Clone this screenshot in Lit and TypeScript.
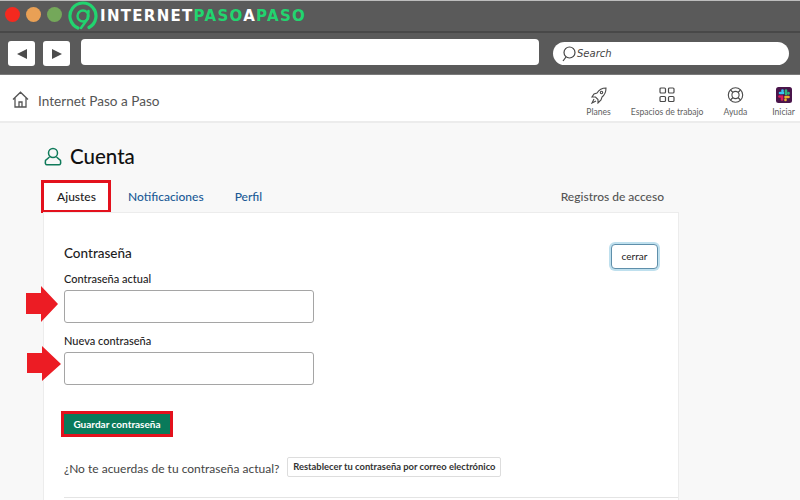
import { LitElement, html, css } from "lit";
import { customElement } from "lit/decorators.js";

@customElement("app-root")
export class AppRoot extends LitElement {
  static styles = css`
    :host { display: block; width: 800px; height: 500px; overflow: hidden; background: #f8f8f8; font-family: Lato, "Liberation Sans", sans-serif; color: #1d1c1d; }
    * { box-sizing: border-box; }
    .chrome { height: 75px; background: #5a5a5a; border-top: 1px solid #bdbdbd; border-bottom: 1px solid #7a7a7a; }
    .titlebar { height: 32px; display: flex; align-items: center; padding-left: 5px; border-bottom: 2px solid #484848; }
    .dot { width: 15px; height: 15px; border-radius: 50%; margin: 0 6px 4px 0; flex: none; }
    .red { background: #f5291f; } .orange { background: #e9a055; } .green { background: #74a85a; }
    .logo { width: 30px; height: 30px; flex: none; }
    .brand { margin-left: 2px; font: 700 15px/1 "DejaVu Sans", sans-serif; color: #fff; letter-spacing: 1.3px; white-space: nowrap; }
    .brand b { font-weight: 700; color: #22d46f; }
    .toolbar { height: 41px; display: flex; align-items: center; padding-left: 8px; }
    .nav-btn { width: 27px; height: 25px; background: #fff; border-radius: 3px; display: flex; align-items: center; justify-content: center; margin-right: 8px; flex: none; }
    .url { width: 458px; height: 26px; background: #fff; border-radius: 4px; margin: 0 0 3px 3px; }
    .search { width: 236px; height: 23px; margin-left: 14px; background: #fff; border-radius: 12px; display: flex; align-items: center; padding-left: 9px; gap: 1px; font: italic 10px "DejaVu Sans", sans-serif; color: #444; }
    .top { height: 48px; background: #fff; border-bottom: 2px solid #ececec; display: flex; align-items: center; padding-left: 12px; }
    .home { margin-top: 2px; flex: none; }
    .site { margin: 5px 0 0 9px; font-size: 13.6px; color: #555; }
    .spacer { flex: 1; }
    .items { display: flex; height: 100%; align-items: flex-start; padding-top: 11px; }
    .item { display: flex; flex-direction: column; align-items: center; font-size: 8.6px; color: #616161; gap: 3px; white-space: nowrap; }
    .item svg { display: block; height: 18px; }
    .planes { margin-right: 20px; } .esp { margin-right: 20px; } .ayu { margin-right: 25px; } .ini { margin-right: 5px; }
    main { position: relative; padding: 22px 121px 0 43px; }
    h1 { margin: 0; display: flex; align-items: center; gap: 8px; padding-left: 1px; font-size: 20.5px; font-weight: 500; line-height: 22px; color: #111; }
    .tabs { display: flex; align-items: center; margin-top: 13px; height: 32px; font-size: 12px; color: #1264a3; }
    .tab { margin-right: 31px; font-weight: 500; color: #1a5a96; }
    .tab.active { width: 70px; height: 33px; margin: 0 17px 0 -2px; padding-left: 1px; border: 3px solid #e3111d; background: #fff; color: #1d1c1d; display: flex; align-items: center; justify-content: center; }
    .tab.log { margin: 0 15px 0 auto; color: #555; }
    .card { position: relative; background: #fff; border: 1px solid #ececec; border-bottom: 0; height: 300px; padding: 31px 20px 0 20px; }
    .head { display: flex; justify-content: space-between; align-items: flex-start; height: 25px; }
    h2 { margin: 0; font-size: 13.5px; font-weight: 500; line-height: 19px; color: #1d1c1d; }
    .close { width: 47px; height: 25px; padding-bottom: 1px; background: #fff; border: 1.5px solid #5f8faa; border-radius: 4px; box-shadow: 0 0 0 2px #bfe0ee; font-size: 10px; display: flex; align-items: center; justify-content: center; color: #222; }
    label { display: block; font-size: 11px; font-weight: 500; line-height: 14px; color: #1d1c1d; margin-bottom: 4px; }
    .first { margin-top: 3px; } .second { margin-top: 11px; }
    .input { width: 250px; height: 33px; background: #fff; border: 1px solid #a5a5a5; border-radius: 3px; }
    .save { margin-top: 29px; width: 106px; height: 20px; background: #097a5a; outline: 3px solid #e3111d; color: #fff; font-size: 10px; font-weight: 700; display: flex; align-items: center; justify-content: center; }
    .forgot { display: flex; align-items: center; margin-top: 25px; height: 19px; font-size: 12px; color: #444; white-space: nowrap; }
    .reset { margin: -4px 0 0 8px; width: 214px; height: 20px; background: #fff; border: 1px solid #ddd; border-radius: 2px; font-size: 9.4px; font-weight: 700; color: #333; display: flex; align-items: center; justify-content: center; }
    hr { border: 0; border-top: 1px solid #e4e4e4; margin: 19px -20px 0 0; }
    .arrow { position: absolute; display: block; }
    .a1 { left: 26px; top: 163px; } .a2 { left: 27px; top: 223px; }
  `;

  render() {
    return html`
      <div class="chrome">
        <div class="titlebar">
          <span class="dot red"></span><span class="dot orange"></span><span class="dot green"></span>
          <svg class="logo" viewBox="0 0 30 30" fill="none" stroke="#22d46f" stroke-linecap="round">
            <path d="M10 27 A13 13 0 1 1 21 26.5" stroke-width="3.2"/>
            <circle cx="15" cy="15" r="5.5" stroke-width="2.4"/>
            <path d="M20.5 10 L19.5 18 L13 27" stroke-width="2.6"/>
          </svg>
          <span class="brand">INTERNET<b>PASO</b>A<b>PASO</b></span>
        </div>
        <div class="toolbar">
          <div class="nav-btn"><svg width="10" height="10" viewBox="0 0 10 10"><path d="M0 5 L10 0 V10Z" fill="#4c4c4c"/></svg></div>
          <div class="nav-btn"><svg width="10" height="10" viewBox="0 0 10 10"><path d="M10 5 L0 0 V10Z" fill="#4c4c4c"/></svg></div>
          <div class="url"></div>
          <div class="search">
            <svg width="14" height="16" viewBox="0 0 14 16" fill="none" stroke="#444" stroke-width="1.2"><circle cx="7.5" cy="6.5" r="5.5"/><path d="M4 11 L1 15"/></svg>
            <span>Search</span>
          </div>
        </div>
      </div>
      <div class="top">
        <svg class="home" width="17" height="17" viewBox="0 0 17 17" fill="none" stroke="#555" stroke-width="1.3"><path d="M1 8.5 L8.5 1.2 L16 8.5 M3 7 V16 H14 V7 M7 16 V11 H10 V16"/></svg>
        <span class="site">Internet Paso a Paso</span>
        <span class="spacer"></span>
        <div class="items">
          <div class="item planes">
            <svg width="18" height="18" viewBox="0 0 18 18" fill="none" stroke="#4a4a4a" stroke-width="1.1"><path d="M16 2 Q10 2 7 7 L4 8 L2 11 L5.5 11 L8 13.5 L8 17 L11 14 L12 11 Q16 8 16 2Z"/><circle cx="11.5" cy="6.5" r="1.2"/><path d="M4 13 L2 17 L6 15"/></svg>
            <span>Planes</span>
          </div>
          <div class="item esp">
            <svg width="16" height="16" viewBox="0 0 16 16" fill="none" stroke="#4a4a4a" stroke-width="1.2"><rect x="1" y="1" width="5.5" height="5" rx="1"/><rect x="9.5" y="1" width="5.5" height="5" rx="1"/><rect x="1" y="9.5" width="5.5" height="5" rx="1"/><rect x="9.5" y="9.5" width="5.5" height="5" rx="1"/></svg>
            <span>Espacios de trabajo</span>
          </div>
          <div class="item ayu">
            <svg width="17" height="17" viewBox="0 0 17 17" fill="none" stroke="#4a4a4a" stroke-width="1.1"><circle cx="8.5" cy="8.5" r="7.2"/><circle cx="8.5" cy="8.5" r="3.6"/><path d="M3.5 3.5 L6 6 M13.5 3.5 L11 6 M3.5 13.5 L6 11 M13.5 13.5 L11 11"/></svg>
            <span>Ayuda</span>
          </div>
          <div class="item ini">
            <svg width="16" height="16" viewBox="0 0 16 16" fill="none" stroke-width="2.6" stroke-linecap="round"><rect width="16" height="16" rx="2.5" fill="#4a154b"/><path d="M4 6 H7" stroke="#36c5f0"/><path d="M6.5 3.5 V4" stroke="#36c5f0"/><path d="M10 3.5 V7" stroke="#2eb67d"/><path d="M12.5 6 V6.5" stroke="#2eb67d"/><path d="M6 9.5 V12.5" stroke="#e01e5a"/><path d="M3.5 9.5 H4" stroke="#e01e5a"/><path d="M9.5 10 H12.5" stroke="#ecb22e"/><path d="M9.5 12.5 V13" stroke="#ecb22e"/></svg>
            <span>Iniciar</span>
          </div>
        </div>
      </div>
      <main>
        <h1>
          <svg width="18" height="19" viewBox="0 0 18 19" fill="none" stroke="#0f7a5a" stroke-width="1.5"><circle cx="9" cy="6" r="4.5"/><path d="M5.5 10 L1.5 13.5 Q0.8 17.8 3 17.8 H15 Q17.2 17.8 16.5 13.5 L12.5 10"/></svg>
          Cuenta
        </h1>
        <div class="tabs">
          <span class="tab active">Ajustes</span>
          <span class="tab">Notificaciones</span>
          <span class="tab">Perfil</span>
          <span class="tab log">Registros de acceso</span>
        </div>
        <div class="card">
          <div class="head">
            <h2>Contraseña</h2>
            <div class="close">cerrar</div>
          </div>
          <label class="first">Contraseña actual</label>
          <div class="input"></div>
          <label class="second">Nueva contraseña</label>
          <div class="input"></div>
          <div class="save">Guardar contraseña</div>
          <div class="forgot">¿No te acuerdas de tu contraseña actual?
            <span class="reset">Restablecer tu contraseña por correo electrónico</span>
          </div>
          <hr />
        </div>
        <svg class="arrow a1" width="33" height="37" viewBox="0 0 33 37"><path d="M0 7 H15 V0 L32 18 L15 36 V28 H0Z" fill="#ec1c24"/></svg>
        <svg class="arrow a2" width="35" height="36" viewBox="0 0 35 36"><path d="M0 7 H15 V0 L34 18 L15 35 V27 H0Z" fill="#ec1c24"/></svg>
      </main>
    `;
  }
}
